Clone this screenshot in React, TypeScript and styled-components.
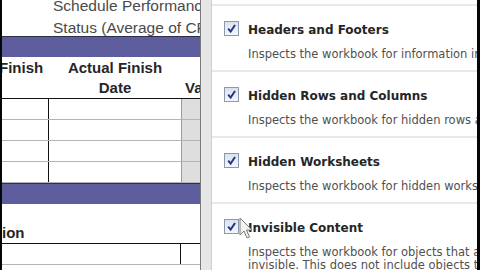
import * as React from "react";
import styled, { createGlobalStyle } from "styled-components";

const GlobalStyle = createGlobalStyle`
  html, body {
    margin: 0;
    padding: 0;
    background: #000;
  }
`;

const Screen = styled.div`
  width: 480px;
  height: 270px;
  overflow: hidden;
  display: flex;
  background: #000;
  position: relative;
`;

const Edge = styled.div<{ $w: number }>`
  width: ${(p) => p.$w}px;
  flex-shrink: 0;
  background: #050505;
`;

const Sheet = styled.div`
  width: 198px;
  flex-shrink: 0;
  background: #fff;
  overflow: hidden;
  display: flex;
  flex-direction: column;
  font-family: "Liberation Sans", Arial, sans-serif;
  color: #262626;
`;

const Caption = styled.div`
  height: 36px;
  padding-left: 51px;
  font-size: 15.5px;
  line-height: 22px;
  color: #4a4a4a;
  white-space: nowrap;
  overflow: hidden;
  flex-shrink: 0;
  & > div:first-child {
    margin-top: -5px;
  }
`;

const Band = styled.div`
  height: 20px;
  flex-shrink: 0;
  border-top: 1px solid #2e2e48;
  background: #5d5c9c;
`;

const HeadRow = styled.div`
  height: 41px;
  flex-shrink: 0;
  display: grid;
  grid-template-columns: 47px 132px 19px;
  border-bottom: 1px solid #111;
  font-size: 15px;
  font-weight: bold;
  line-height: 20px;
`;

const HeadCell = styled.div<{ $align?: string; $pad?: number }>`
  text-align: ${(p) => p.$align || "center"};
  padding-top: ${(p) => p.$pad ?? 0}px;
  white-space: nowrap;
  overflow: hidden;
`;

const ClipLeft = styled.span`
  display: inline-block;
  margin-left: -3px;
`;

const Indent = styled.span`
  padding-left: 4px;
`;

const DataRow = styled.div<{ $split?: boolean }>`
  height: 20px;
  flex-shrink: 0;
  display: grid;
  grid-template-columns: 47px 132px 19px;
  border-bottom: 1px solid #b4b4b4;
  & > div:nth-child(1) {
    border-right: ${(p) => (p.$split ? "1px solid #111" : "none")};
  }
`;

const Cell = styled.div<{ $shade?: boolean; $rule?: boolean }>`
  background: ${(p) => (p.$shade ? "#dedede" : "#fff")};
  border-left: ${(p) => (p.$shade ? "1px solid #9a9a9a" : "none")};
  border-right: ${(p) => (p.$rule ? "1px solid #111" : "none")};
`;

const Section = styled.div`
  height: 40px;
  flex-shrink: 0;
  border-bottom: 1px solid #111;
  display: flex;
  align-items: flex-end;
  font-size: 15px;
  font-weight: bold;
  line-height: 18px;
  padding-bottom: 1px;
  box-sizing: border-box;
`;

const Divider = styled.div`
  width: 12px;
  flex-shrink: 0;
  background: #e6e6e6;
  border-left: 1px solid #7a7a7a;
  border-right: 1px solid #cfcfcf;
  box-sizing: border-box;
`;

const Panel = styled.div`
  flex: 1;
  background: #fff;
  padding-top: 4px;
  overflow: hidden;
  font-family: "DejaVu Sans", Tahoma, sans-serif;
`;

const Item = styled.div`
  height: 66px;
  box-sizing: border-box;
  border-top: 2px solid #e8e8e8;
  padding: 15px 0 0 12px;
  display: flex;
  gap: 9px;
`;

const Box = styled.div`
  width: 15px;
  height: 15px;
  flex-shrink: 0;
  box-sizing: border-box;
  border: 1px solid #8d98ad;
  background: linear-gradient(#dbe2ef, #f4f6fa);
  display: flex;
  align-items: center;
  justify-content: center;
`;

const Texts = styled.div`
  white-space: nowrap;
  padding-top: 2px;
`;

const Title = styled.div`
  font-size: 12px;
  font-weight: bold;
  line-height: 14px;
  color: #262626;
  margin-bottom: 11px;
`;

const Desc = styled.div`
  font-size: 11.5px;
  line-height: 13px;
  color: #505050;
`;

const Pointer = styled.svg`
  position: absolute;
  left: 239px;
  top: 217px;
`;

const items = [
  { title: "Headers and Footers", desc: ["Inspects the workbook for information in"] },
  { title: "Hidden Rows and Columns", desc: ["Inspects the workbook for hidden rows and"] },
  { title: "Hidden Worksheets", desc: ["Inspects the workbook for hidden worksheets"] },
  {
    title: "Invisible Content",
    desc: [
      "Inspects the workbook for objects that are",
      "invisible. This does not include objects that",
    ],
  },
];

function Check() {
  return (
    <svg width="11" height="11" viewBox="0 0 10 10">
      <path d="M2 5.2 L4.2 7.8 L8.2 1.8" fill="none" stroke="#23348a" strokeWidth="1.8" />
    </svg>
  );
}

export default function App() {
  return (
    <Screen>
      <GlobalStyle />
      <Edge $w={2} />
      <Sheet>
        <Caption>
          <div>Schedule Performance Index</div>
          <div>Status (Average of CPI and SPI)</div>
        </Caption>
        <Band />
        <HeadRow>
          <HeadCell $align="left" $pad={1}>
            <ClipLeft>Finish</ClipLeft>
          </HeadCell>
          <HeadCell $pad={1}>
            Actual Finish
            <br />
            Date
          </HeadCell>
          <HeadCell $align="left" $pad={21}>
            <Indent>Variance</Indent>
          </HeadCell>
        </HeadRow>
        {[0, 1, 2, 3].map((i) => (
          <DataRow key={i} $split>
            <Cell />
            <Cell />
            <Cell $shade />
          </DataRow>
        ))}
        <Band />
        <Section>ion</Section>
        <DataRow>
          <Cell />
          <Cell $rule />
          <Cell />
        </DataRow>
      </Sheet>
      <Divider />
      <Panel>
        {items.map((it) => (
          <Item key={it.title}>
            <Box>
              <Check />
            </Box>
            <Texts>
              <Title>{it.title}</Title>
              {it.desc.map((d) => (
                <Desc key={d}>{d}</Desc>
              ))}
            </Texts>
          </Item>
        ))}
      </Panel>
      <Edge $w={3} />
      <Pointer width="14" height="23" viewBox="0 0 14 23">
        <path
          d="M1 1 L1 18 L5 14 L8 21 L10.5 20 L7.5 13 L13 13 Z"
          fill="#f4f4f4"
          stroke="#7a7a7a"
          strokeWidth="1"
          strokeLinejoin="round"
        />
      </Pointer>
    </Screen>
  );
}
